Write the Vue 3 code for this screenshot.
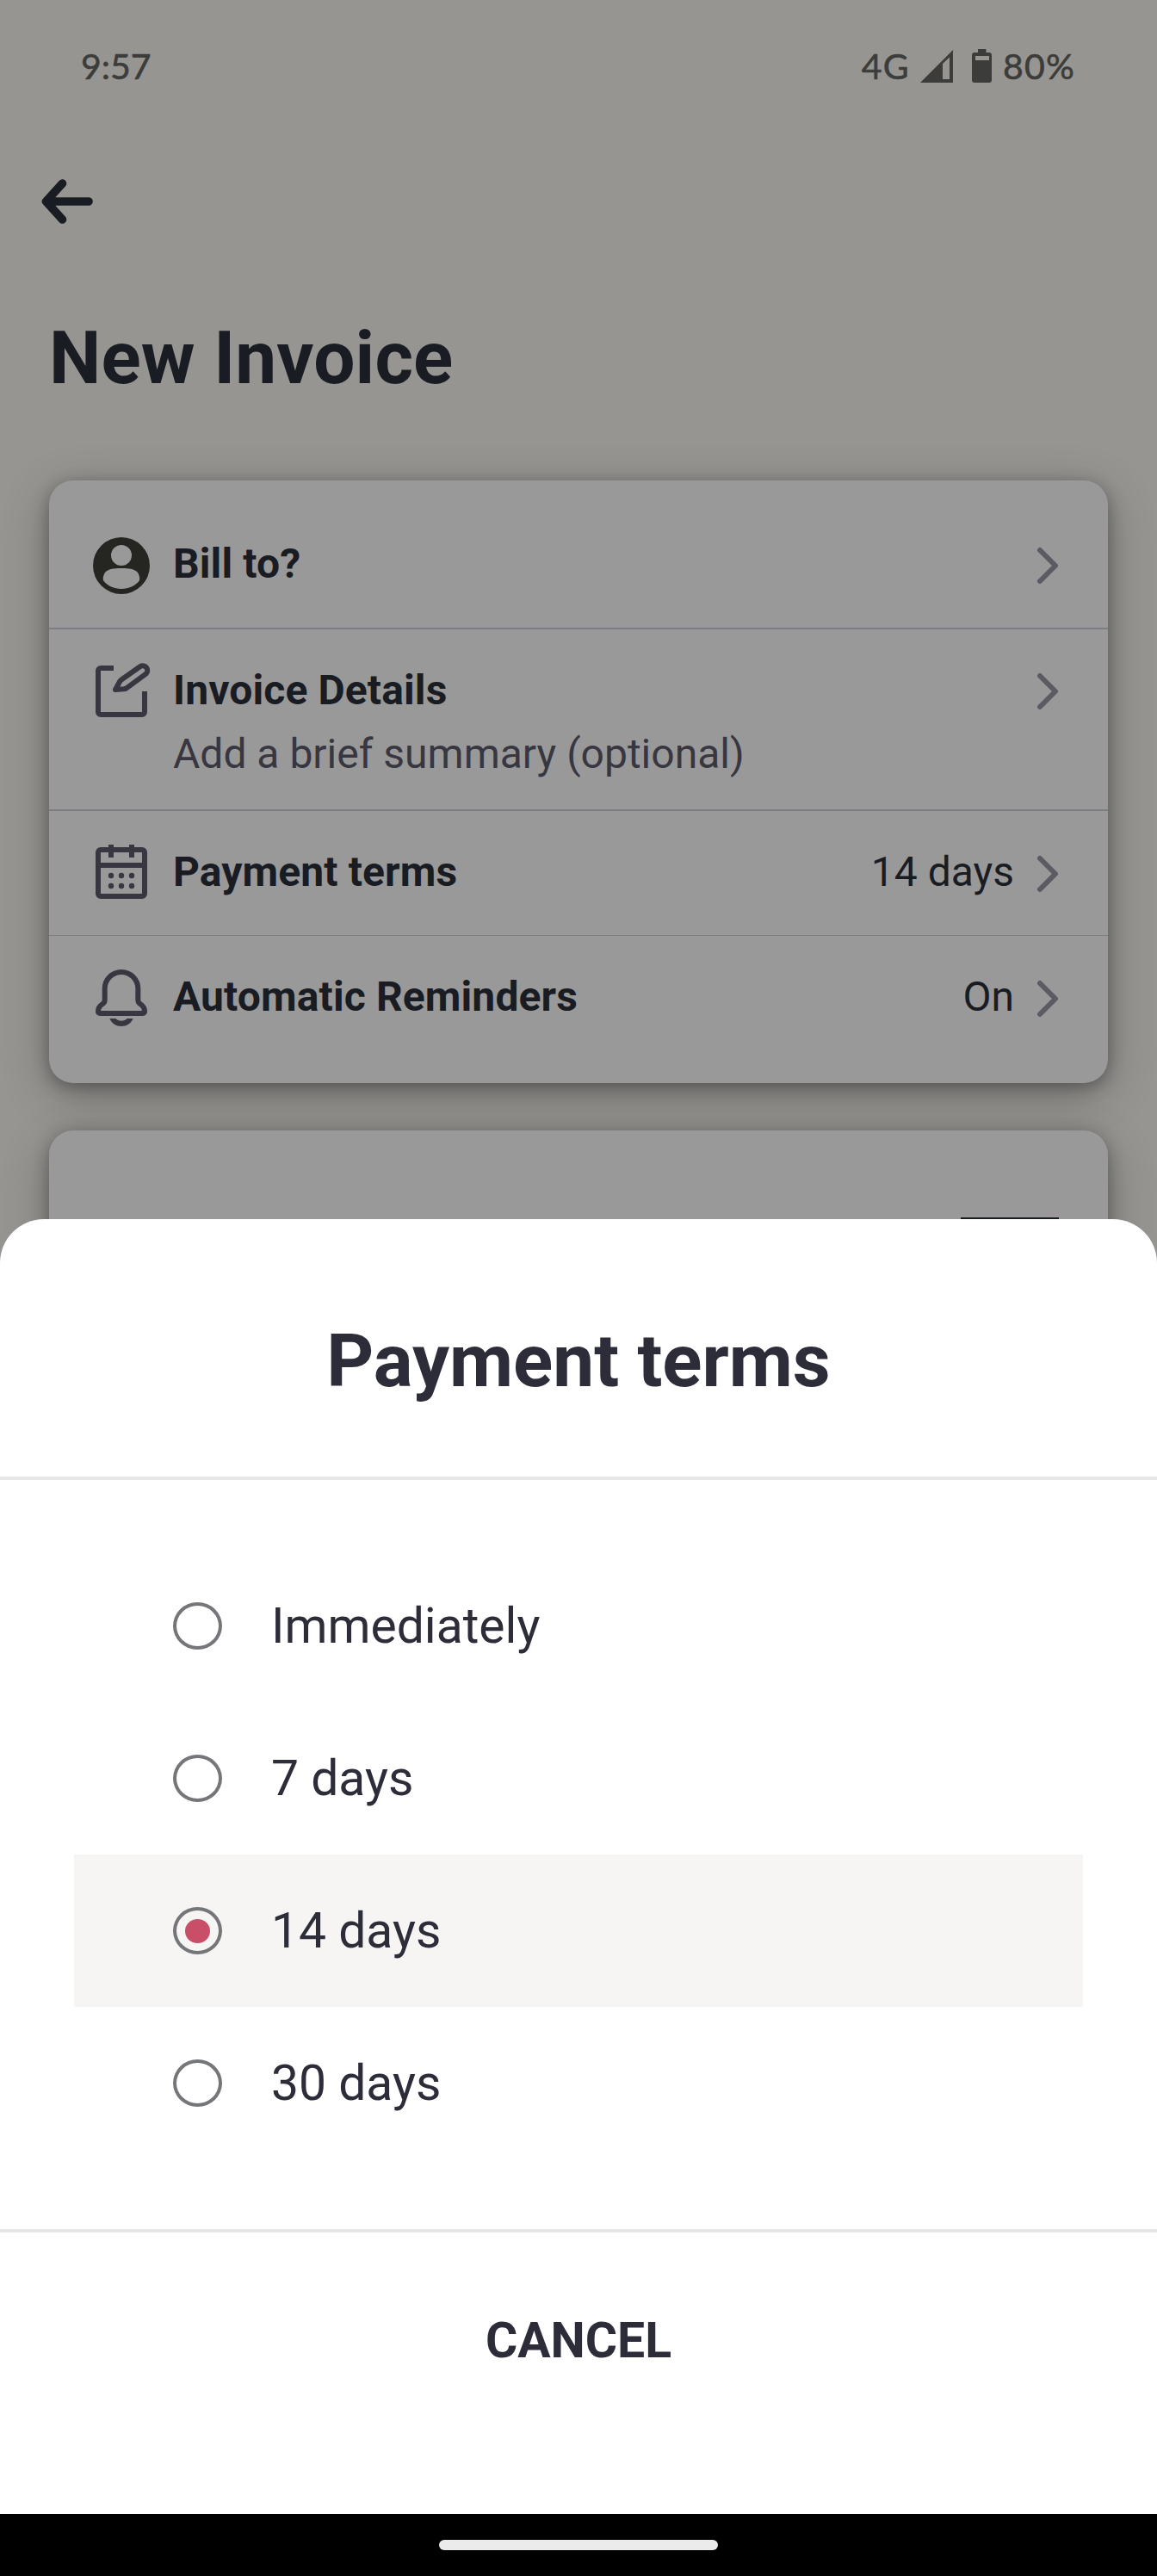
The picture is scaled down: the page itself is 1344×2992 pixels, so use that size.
<script setup>
import { ref } from 'vue'

const rows = [
  { id: 'bill', title: 'Bill to?' },
  { id: 'details', title: 'Invoice Details', note: 'Add a brief summary (optional)' },
  { id: 'terms', title: 'Payment terms', value: '14 days' },
  { id: 'reminders', title: 'Automatic Reminders', value: 'On' },
]
const options = ['Immediately', '7 days', '14 days', '30 days']
const selected = ref('14 days')
</script>

<template>
  <div class="screen">
    <header class="status">
      <span class="clock">9:57</span>
      <div class="indicators">
        <span class="network">4G</span>
        <svg class="signal" width="38" height="38" viewBox="0 0 38 38">
          <path fill-rule="evenodd" d="M0 38 38 0V38ZM26 16V34H34V8.5Z" />
        </svg>
        <svg class="battery" width="23" height="39" viewBox="0 0 23 39">
          <path fill-rule="evenodd" d="M7 0H16.500V4H20a3 3 0 0 1 3 3V36a3 3 0 0 1-3 3H3a3 3 0 0 1-3-3V7a3 3 0 0 1 3-3H7ZM4 8V13H20V8Z" />
        </svg>
        <span class="percent">80%</span>
      </div>
    </header>

    <nav class="toolbar">
      <svg width="60" height="54" viewBox="0 0 60 54">
        <path d="M24.500 6 5.500 27 24.500 48M6 27H55" />
      </svg>
    </nav>

    <h1 class="heading">New Invoice</h1>

    <section class="card">
      <div v-for="row in rows" :key="row.id" class="row" :class="row.id">
        <svg v-if="row.id === 'bill'" class="icon solid" viewBox="0 0 72 72">
          <path fill-rule="evenodd" d="M36 3a33 33 0 1 0 0 66a33 33 0 1 0 0-66ZM36 12a12 12 0 1 1 0 24a12 12 0 1 1 0-24ZM36 39C46 39 50 40 53.500 42.500C56.500 45 58 50 56.800 53.500C52 59.500 44.500 63 36 63C27.500 63 20 59.500 15.200 53.500C14 50 15.500 45 18.500 42.500C22 40 26 39 36 39Z" />
        </svg>
        <svg v-else-if="row.id === 'details'" class="icon" viewBox="0 0 72 72">
          <path d="M27 9H12a3 3 0 0 0-3 3V60a3 3 0 0 0 3 3H60a3 3 0 0 0 3-3V36" />
          <path d="M29 34 34 24.800Q34.700 23.400 36 22.500L58 7A5.500 5.500 0 0 1 64.600 15.700L42.500 31.800Q41 33 39 33.300Z" />
        </svg>
        <svg v-else-if="row.id === 'terms'" class="icon" viewBox="0 0 72 72">
          <rect x="9" y="8" width="54" height="54" rx="3" />
          <path d="M9 26H63M24 2V17M48 2V17" />
          <g class="dots">
            <circle v-for="n in 6" :key="n" :cx="24 + ((n - 1) % 3) * 12" :cy="n > 3 ? 50 : 38" r="3.200" />
          </g>
        </svg>
        <svg v-else class="icon" viewBox="0 0 72 72">
          <path d="M36 5A19.300 19.300 0 0 1 55.300 24.300V37.500C55.300 40.500 56.500 41.500 58.700 42.700C61.500 44.500 63 47 63 51A2 2 0 0 1 61 53H11A2 2 0 0 1 9 51C9 47 10.500 44.500 13.300 42.700C15.500 41.500 16.700 40.500 16.700 37.500V24.300A19.300 19.300 0 0 1 36 5Z" />
          <path class="clapper" d="M22.300 59H29.500C32.500 62.600 39.500 62.600 42.500 59H49.700C47 65 42 68 36 68S25 65 22.300 59Z" />
        </svg>
        <div class="texts">
          <span class="title">{{ row.title }}</span>
          <span v-if="row.note" class="note">{{ row.note }}</span>
        </div>
        <span v-if="row.value" class="value">{{ row.value }}</span>
        <svg class="chevron" width="26" height="72" viewBox="0 0 26 72">
          <path d="M4 18 22 36 4 54" />
        </svg>
      </div>
    </section>

    <section class="card next">
      <span class="field-line"></span>
    </section>

    <div class="sheet">
      <h2 class="sheet-title">Payment terms</h2>
      <ul class="options">
        <li
          v-for="option in options"
          :key="option"
          class="option"
          :class="{ active: option === selected }"
          @click="selected = option"
        >
          <span class="radio"><span v-if="option === selected" class="radio-dot"></span></span>
          <span class="option-label">{{ option }}</span>
        </li>
      </ul>
      <button class="cancel" type="button">CANCEL</button>
      <div class="home-bar"><span class="pill"></span></div>
    </div>
  </div>
</template>

<style>
body {
  margin: 0;
  background: #979592;
}
</style>

<style scoped>
.screen {
  position: relative;
  width: 1344px;
  height: 2992px;
  overflow: hidden;
  background: #979592;
  color: #1a1c23;
  font-family: Roboto, "Liberation Sans", sans-serif;
}
.status {
  display: flex;
  justify-content: space-between;
  height: 154px;
  padding: 0 95px 0 94px;
  box-sizing: border-box;
  color: #3c3c3b;
  fill: #3c3c3b;
  font: 400 41px/50px Lato, Roboto, sans-serif;
  -webkit-text-stroke: 0.6px #3c3c3b;
}
.clock {
  margin-top: 52px;
}
.indicators {
  display: flex;
  align-items: flex-start;
}
.indicators svg {
  stroke: none;
}
.network,
.percent {
  margin-top: 52px;
  letter-spacing: 1.2px;
}
.network {
  margin-right: 12px;
}
.signal {
  margin: 58px 22px 0 0;
}
.battery {
  margin: 57px 13px 0 0;
}
.toolbar {
  display: flex;
  align-items: center;
  height: 160px;
  padding-left: 48px;
}
.toolbar path {
  fill: none;
  stroke: #1a1c23;
  stroke-width: 9.6;
  stroke-linecap: round;
  stroke-linejoin: round;
}
.heading {
  height: 244px;
  margin: 0;
  padding: 52px 0 0 57px;
  box-sizing: border-box;
  font-size: 85.5px;
  line-height: 100px;
  font-weight: 700;
  letter-spacing: 0.15px;
}
.card {
  width: 1230px;
  margin: 0 57px;
  border-radius: 28px;
  background: #999;
  box-shadow: 0 5px 20px rgba(0, 0, 0, 0.32), 0 14px 56px rgba(0, 0, 0, 0.24);
}
.row {
  display: flex;
  align-items: flex-start;
  box-sizing: border-box;
  padding: 37px 57px 0 48px;
  border-bottom: 2px solid #7c7d82;
}
.row.bill {
  height: 173px;
  padding-top: 63px;
}
.row.details {
  height: 211px;
  padding-top: 36px;
}
.row.terms {
  height: 145px;
  border-bottom-width: 1px;
}
.row.reminders {
  height: 171px;
  border-bottom: 0;
}
.icon {
  width: 72px;
  height: 72px;
  flex: none;
  fill: none;
  stroke: #383741;
  stroke-width: 6;
  stroke-linejoin: round;
}
.icon.solid {
  fill: #252522;
  stroke: none;
}
.dots,
.clapper {
  fill: #383741;
  stroke: none;
}
.texts {
  display: flex;
  flex-direction: column;
  flex: 1;
  margin-left: 24px;
  font-size: 48px;
}
.title {
  font-weight: 700;
  line-height: 70px;
  letter-spacing: 0.12px;
}
.note {
  color: #383741;
  line-height: 78px;
}
.value {
  margin-right: 26px;
  font-size: 48px;
  line-height: 70px;
}
.bill .title,
.terms .title,
.terms .value,
.reminders .title,
.reminders .value {
  line-height: 68px;
}
.chevron {
  flex: none;
  fill: none;
  stroke: #5b5b63;
  stroke-width: 6;
  stroke-linecap: round;
  stroke-linejoin: round;
}
.next {
  display: flex;
  justify-content: flex-end;
  margin-top: 55px;
  height: 400px;
}
.field-line {
  width: 114px;
  height: 2px;
  margin: 101px 57px 0 0;
  background: #1a1c23;
}
.sheet {
  position: absolute;
  left: 0;
  right: 0;
  top: 1416px;
  bottom: 0;
  display: flex;
  flex-direction: column;
  border-radius: 51px 51px 0 0;
  background: #fff;
  color: #2d2d3a;
}
.sheet-title {
  height: 303px;
  margin: 0;
  padding-top: 115px;
  box-sizing: border-box;
  border-bottom: 4px solid #e6e6e6;
  text-align: center;
  font-size: 85.5px;
  line-height: 100px;
  font-weight: 700;
}
.options {
  margin: 0;
  padding: 81px 86px;
  list-style: none;
  border-bottom: 4px solid #e6e6e6;
}
.option {
  display: flex;
  align-items: center;
  height: 177px;
  padding-left: 115px;
  font-size: 57px;
}
.option.active {
  background: #f6f5f3;
}
.radio {
  display: flex;
  align-items: center;
  justify-content: center;
  width: 57px;
  height: 55px;
  margin-right: 57px;
  box-sizing: border-box;
  border: 4px solid #757679;
  border-radius: 50%;
}
.radio-dot {
  width: 29px;
  height: 28px;
  border-radius: 50%;
  background: #c94f68;
}
.cancel {
  flex: 1;
  padding: 0 0 76px;
  border: 0;
  background: none;
  color: inherit;
  font: 700 57px/70px Roboto, "Liberation Sans", sans-serif;
}
.home-bar {
  display: flex;
  align-items: center;
  justify-content: center;
  height: 72px;
  background: #000;
}
.pill {
  width: 324px;
  height: 12px;
  border-radius: 6px;
  background: #ebebeb;
}
</style>
